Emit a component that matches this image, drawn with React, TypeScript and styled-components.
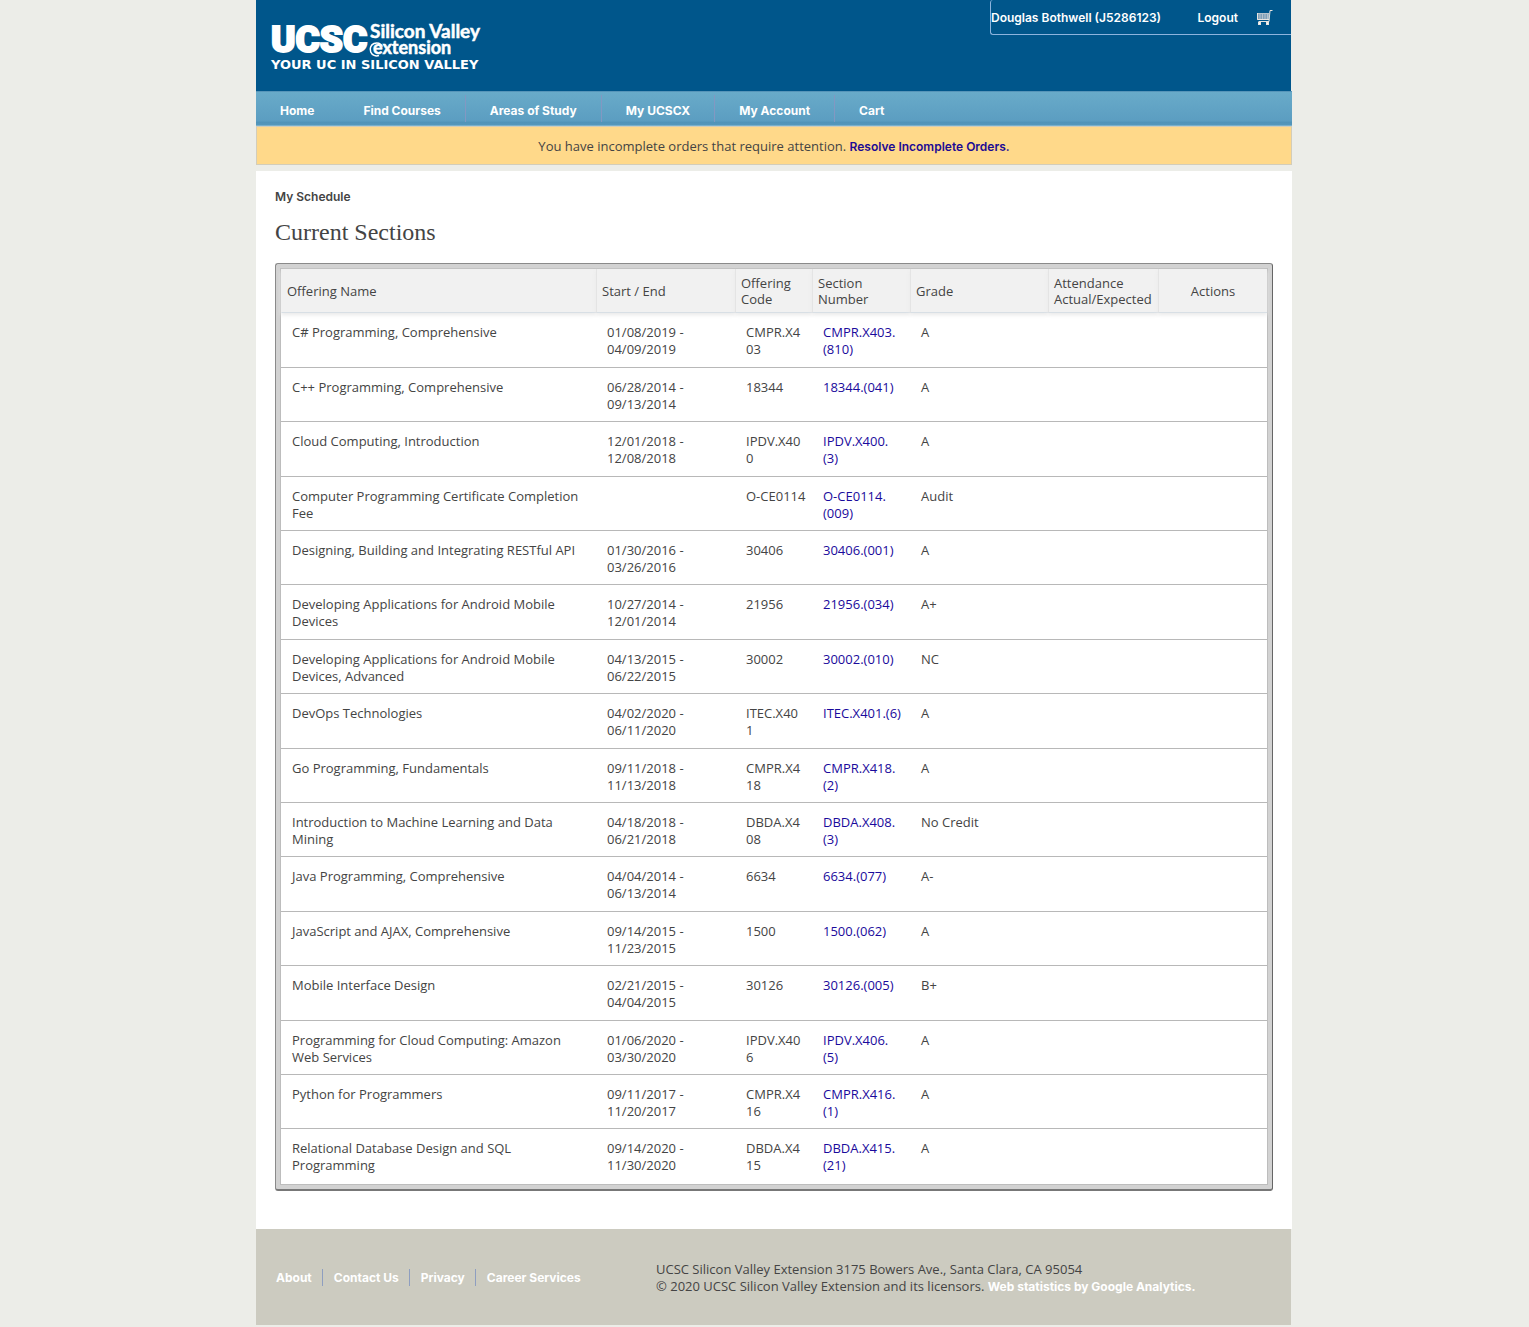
import React from "react";
import styled, { createGlobalStyle } from "styled-components";

const textFont = '"Open Sans", "Noto Sans", sans-serif';
const boldFont = 'Inter, "Open Sans", sans-serif';

const GlobalStyle = createGlobalStyle`
  *, *::before, *::after { box-sizing: border-box; }
  body {
    margin: 0;
    background: #ecede8;
    color: #444;
    font: 13px/17px ${textFont};
  }
  a { color: inherit; text-decoration: none; }
`;

const Page = styled.div`
  max-width: 1055px;
  margin: 0 auto;
  padding-left: 19px;
`;

const Header = styled.header`
  display: flex;
  justify-content: space-between;
  align-items: flex-start;
  margin-right: 1px;
  min-height: 91px;
  background: #00568b;
  color: #fff;
`;

const LogoLink = styled.a`
  display: block;
  padding: 12px 14px 0;
`;

const UserBar = styled.div`
  display: flex;
  align-items: center;
  height: 35px;
  width: 301px;
  border: 1px solid #8db4de;
  border-width: 0 0 1px 1px;
  border-radius: 3px 0 0 3px;
  font: 600 12px/17px ${boldFont};
`;

const UserName = styled.span`
  flex: 1;
`;

const LogoutLink = styled.a`
  margin-right: 18px;
`;

const CartLink = styled.a`
  display: flex;
  margin-right: 18px;
`;

const NavBar = styled.nav`
  display: flex;
  height: 35px;
  border-top: 1px solid #5795b9;
  background: linear-gradient(#69abc9 0%, #5b9dc1 86%, #4f93b8 88%, #5597bb 96%, #8bbfd8 100%);
`;

const NavLink = styled.a<{ $divided?: boolean }>`
  margin: 3px 0 4px;
  padding: 0 24px;
  border-right: 1px solid ${(p) => (p.$divided ? "#8298c2" : "transparent")};
  color: #fff;
  font: 700 12px/31px ${boldFont};
`;

const Notice = styled.div`
  border: 1px solid #d3cdb9;
  background: #ffd98a;
  padding: 11px 0 9px;
  text-align: center;
`;

const NoticeLink = styled.a`
  color: #1c0a94;
  font: 600 12px/17px ${boldFont};
`;

const Main = styled.main`
  margin-top: 6px;
  padding: 17px 19px 38px;
  background: #fff;
`;

const Crumb = styled.div`
  font: 600 12px/17px ${boldFont};
`;

const Title = styled.h1`
  margin: 12px 0 16px;
  font: 400 24px/30px "Liberation Serif", Georgia, serif;
`;

const Frame = styled.div`
  padding: 4px;
  border: 1px solid #8a8a8a;
  border-right-color: #666;
  border-bottom: 2px solid #777;
  border-radius: 3px;
  background: #d2d2d2;
`;

const Inset = styled.div`
  border: 1px solid #bdbdbd;
  background: #fff;
`;

const Table = styled.table`
  width: 100%;
  table-layout: fixed;
  border-collapse: separate;
  border-spacing: 0;
`;

const Col = styled.col<{ $w: number }>`
  width: ${(p) => p.$w}px;
`;

const Th = styled.th<{ $center?: boolean }>`
  height: 44px;
  padding: 0 0 0 ${(p) => (p.$center ? "0" : "5px")};
  border-left: 1px solid #e4e4e4;
  border-bottom: 1px solid #d8dfe5;
  background: #f1f1f1;
  box-shadow: 0 2px 4px #e9e9e9;
  font-weight: 400;
  line-height: 16px;
  text-align: ${(p) => (p.$center ? "center" : "left")};
  &:first-child { border-left-color: #f1f1f1; }
`;

const Td = styled.td`
  height: 54px;
  padding: 11px 8px 8px 11px;
  border-bottom: 1px solid #b8b8b8;
  vertical-align: top;
`;

const NameCell = styled(Td)`
  padding-right: 15px;
`;

const CodeCell = styled(Td)`
  padding-right: 5px;
  white-space: pre-line;
`;

const Row = styled.tr`
  &:nth-child(5n + 1) ${Td}, &:nth-child(5n + 3) ${Td} { height: 55px; }
  &:last-child ${Td} { border-bottom: 0; }
`;

const SectionLink = styled.a`
  color: #1a0a9c;
`;

const Footer = styled.footer`
  display: grid;
  grid-template-columns: 380px 1fr;
  align-items: center;
  margin: 0 1px 2px 0;
  min-height: 96px;
  padding: 0 20px;
  background: #cccbc0;
`;

const FooterNav = styled.nav`
  display: flex;
`;

const FooterLink = styled.a`
  padding: 0 10px 0 11px;
  border-left: 1px solid #8e9ec0;
  color: #fff;
  font: 700 12px/17px ${boldFont};
  &:first-child { padding-left: 0; border-left: 0; }
`;

const FooterText = styled.p`
  margin: 0;
  padding-top: 2px;
`;

const StatsLink = styled.a`
  color: #fff;
  font: 700 12px/17px ${boldFont};
`;

const Logo = () => (
  <svg width="212" height="62" viewBox="0 -8 212 62" role="img" aria-label="UCSC Silicon Valley Extension" fill="#fff" stroke="#fff">
    <text x="1" y="32" fontFamily="Roboto" fontWeight="900" fontSize="37" strokeWidth="2">UCSC</text>
    <text x="100" y="18" fontFamily="Lato" fontWeight="700" fontSize="19" strokeWidth="0.500">Silicon Valley</text>
    <text x="103" y="34" fontFamily="Lato" fontWeight="700" fontSize="18" strokeWidth="0.500">extension</text>
    <path d="M109 35.500a6.500 6.500 0 1 1 3.500-9" fill="none" strokeWidth="1.500" />
    <text x="1" y="49" fontFamily="DejaVu Sans" fontWeight="700" fontSize="13" stroke="none">YOUR UC IN SILICON VALLEY</text>
  </svg>
);

const CartIcon = () => (
  <svg width="17" height="17" viewBox="0 0 17 17" fill="none" stroke="#e8e4e0" aria-hidden="true">
    <path d="M16.500 1.500h-2.500l-1 11H2.500" />
    <path d="M1.500 4.500v6h11l.5-6z" fill="#7f9fb8" stroke="#b4c2cc" />
    <path d="M4 4v6M6.500 4v6M9 4v6M11.500 4v6" stroke="#b4c2cc" />
    <path d="M1.500 4v6.500h11.500" />
    <rect x="2.500" y="13.500" width="2" height="2" fill="#fff" />
    <rect x="10.500" y="13.500" width="2" height="2" fill="#fff" />
  </svg>
);

const navItems = ["Home", "Find Courses", "Areas of Study", "My UCSCX", "My Account", "Cart"];
const footerItems = ["About", "Contact Us", "Privacy", "Career Services"];
const columnWidths = [315, 139, 77, 98, 138, 110, 109];

type Section = [name: string, start: string, end: string, code: string, section: string, part: string, grade: string];

// Long offering codes carry a line break so that they fit their narrow column.
const sections: Section[] = [
  ["C# Programming, Comprehensive", "01/08/2019", "04/09/2019", "CMPR.X4\n03", "CMPR.X403.", "(810)", "A"],
  ["C++ Programming, Comprehensive", "06/28/2014", "09/13/2014", "18344", "18344.", "(041)", "A"],
  ["Cloud Computing, Introduction", "12/01/2018", "12/08/2018", "IPDV.X40\n0", "IPDV.X400.", "(3)", "A"],
  ["Computer Programming Certificate Completion Fee", "", "", "O-CE0114", "O-CE0114.", "(009)", "Audit"],
  ["Designing, Building and Integrating RESTful API", "01/30/2016", "03/26/2016", "30406", "30406.", "(001)", "A"],
  ["Developing Applications for Android Mobile Devices", "10/27/2014", "12/01/2014", "21956", "21956.", "(034)", "A+"],
  ["Developing Applications for Android Mobile Devices, Advanced", "04/13/2015", "06/22/2015", "30002", "30002.", "(010)", "NC"],
  ["DevOps Technologies", "04/02/2020", "06/11/2020", "ITEC.X40\n1", "ITEC.X401.", "(6)", "A"],
  ["Go Programming, Fundamentals", "09/11/2018", "11/13/2018", "CMPR.X4\n18", "CMPR.X418.", "(2)", "A"],
  ["Introduction to Machine Learning and Data Mining", "04/18/2018", "06/21/2018", "DBDA.X4\n08", "DBDA.X408.", "(3)", "No Credit"],
  ["Java Programming, Comprehensive", "04/04/2014", "06/13/2014", "6634", "6634.", "(077)", "A-"],
  ["JavaScript and AJAX, Comprehensive", "09/14/2015", "11/23/2015", "1500", "1500.", "(062)", "A"],
  ["Mobile Interface Design", "02/21/2015", "04/04/2015", "30126", "30126.", "(005)", "B+"],
  ["Programming for Cloud Computing: Amazon Web Services", "01/06/2020", "03/30/2020", "IPDV.X40\n6", "IPDV.X406.", "(5)", "A"],
  ["Python for Programmers", "09/11/2017", "11/20/2017", "CMPR.X4\n16", "CMPR.X416.", "(1)", "A"],
  ["Relational Database Design and SQL Programming", "09/14/2020", "11/30/2020", "DBDA.X4\n15", "DBDA.X415.", "(21)", "A"],
];

export default function App() {
  return (
    <Page>
      <GlobalStyle />
      <Header>
        <LogoLink href="#"><Logo /></LogoLink>
        <UserBar>
          <UserName>Douglas Bothwell (J5286123)</UserName>
          <LogoutLink href="#">Logout</LogoutLink>
          <CartLink href="#" aria-label="Cart"><CartIcon /></CartLink>
        </UserBar>
      </Header>
      <NavBar>
        {navItems.map((item, i) => (
          <NavLink key={item} href="#" $divided={i > 0 && i < navItems.length - 1}>{item}</NavLink>
        ))}
      </NavBar>
      <Notice>
        You have incomplete orders that require attention. <NoticeLink href="#">Resolve Incomplete Orders.</NoticeLink>
      </Notice>
      <Main>
        <Crumb>My Schedule</Crumb>
        <Title>Current Sections</Title>
        <Frame>
          <Inset>
            <Table>
              <colgroup>
                {columnWidths.map((w, i) => <Col key={i} $w={w} />)}
              </colgroup>
              <thead>
                <tr>
                  <Th>Offering Name</Th>
                  <Th>Start / End</Th>
                  <Th>Offering<br />Code</Th>
                  <Th>Section<br />Number</Th>
                  <Th>Grade</Th>
                  <Th>Attendance<br />Actual/Expected</Th>
                  <Th $center>Actions</Th>
                </tr>
              </thead>
              <tbody>
                {sections.map(([name, start, end, code, section, part, grade]) => (
                  <Row key={name}>
                    <NameCell>{name}</NameCell>
                    <Td>{start && <>{start} -<br />{end}</>}</Td>
                    <CodeCell>{code}</CodeCell>
                    <Td><SectionLink href="#">{section}<wbr />{part}</SectionLink></Td>
                    <Td>{grade}</Td>
                    <Td />
                    <Td />
                  </Row>
                ))}
              </tbody>
            </Table>
          </Inset>
        </Frame>
      </Main>
      <Footer>
        <FooterNav>
          {footerItems.map((item) => <FooterLink key={item} href="#">{item}</FooterLink>)}
        </FooterNav>
        <FooterText>
          UCSC Silicon Valley Extension 3175 Bowers Ave., Santa Clara, CA 95054<br />
          © 2020 UCSC Silicon Valley Extension and its licensors. <StatsLink href="#">Web statistics by Google Analytics.</StatsLink>
        </FooterText>
      </Footer>
    </Page>
  );
}
